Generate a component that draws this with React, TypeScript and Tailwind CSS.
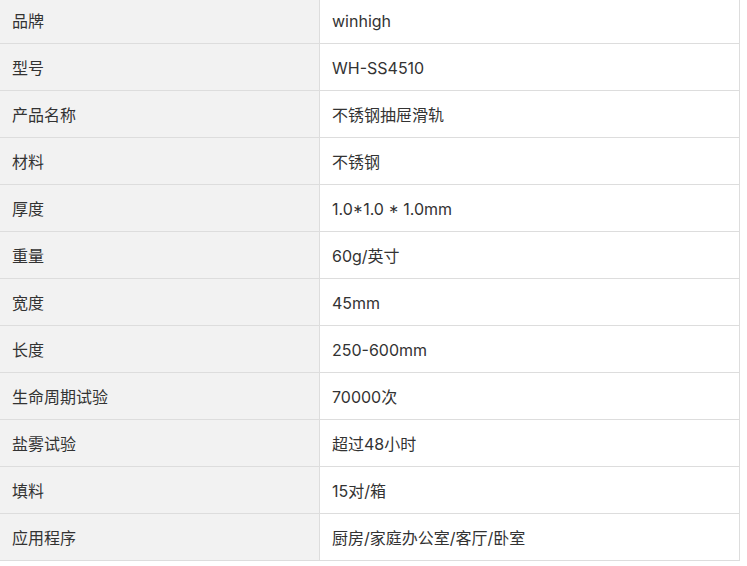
import React from "react";

const rows: [string, string][] = [
  ["品牌", "winhigh"],
  ["型号", "WH-SS4510"],
  ["产品名称", "不锈钢抽屉滑轨"],
  ["材料", "不锈钢"],
  ["厚度", "1.0*1.0 * 1.0mm"],
  ["重量", "60g/英寸"],
  ["宽度", "45mm"],
  ["长度", "250-600mm"],
  ["生命周期试验", "70000次"],
  ["盐雾试验", "超过48小时"],
  ["填料", "15对/箱"],
  ["应用程序", "厨房/家庭办公室/客厅/卧室"],
];

export default function App() {
  return (
    <div className="w-[747px] h-[566px] overflow-hidden bg-white">
      <table
        className="mt-[-4px] ml-[-1px] w-[741px] border-collapse text-[16px] text-[#333]"
        style={{ fontFamily: '"Inter", "Noto Sans CJK SC", sans-serif' }}
      >
        <tbody>
          {rows.map(([k, v]) => (
            <tr key={k} className="h-[47px]">
              <td className="w-[320px] border border-[#dddddd] bg-[#f2f2f2] px-[12px] pt-[1px] pb-0 align-middle">
                {k}
              </td>
              <td className="border border-[#dddddd] bg-white px-[12px] pt-[1px] pb-0 align-middle">
                {v}
              </td>
            </tr>
          ))}
        </tbody>
      </table>
    </div>
  );
}
